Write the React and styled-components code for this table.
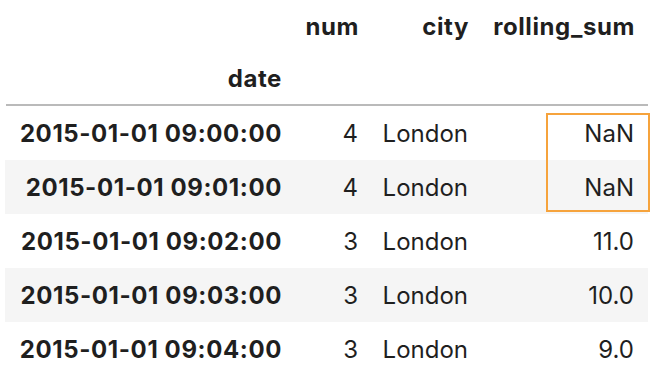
import styled, { createGlobalStyle } from "styled-components";

const GlobalStyle = createGlobalStyle`
  html, body {
    margin: 0;
    padding: 0;
    background: #ffffff;
  }
  body {
    font-family: Inter, "Liberation Sans", sans-serif;
    color: #1f1f1f;
  }
`;

const rows = [
  { date: "2015-01-01 09:00:00", num: 4, city: "London", sum: "NaN" },
  { date: "2015-01-01 09:01:00", num: 4, city: "London", sum: "NaN" },
  { date: "2015-01-01 09:02:00", num: 3, city: "London", sum: "11.0" },
  { date: "2015-01-01 09:03:00", num: 3, city: "London", sum: "10.0" },
  { date: "2015-01-01 09:04:00", num: 3, city: "London", sum: "9.0" },
];

export default function App() {
  return (
    <>
      <GlobalStyle />
      <Frame>
        <Table>
          <Row $height={52}>
            <Cell />
            <HeadCell>num</HeadCell>
            <HeadCell>city</HeadCell>
            <HeadCell>rolling_sum</HeadCell>
          </Row>
          <Row $height={52}>
            <HeadCell>date</HeadCell>
            <Cell />
            <Cell />
            <Cell />
          </Row>
          <Divider />
          {rows.map((r, i) => (
            <Row key={r.date} $height={54} $striped={i % 2 === 1}>
              <HeadCell>{r.date}</HeadCell>
              <Cell>{r.num}</Cell>
              <Cell>{r.city}</Cell>
              <Cell>{r.sum}</Cell>
            </Row>
          ))}
          <Highlight />
        </Table>
      </Frame>
    </>
  );
}

const Frame = styled.div`
  width: 656px;
  height: 386px;
  padding-left: 5px;
  box-sizing: border-box;
  overflow: hidden;
`;
const Table = styled.div`
  position: relative;
  width: 643px;
  display: flex;
  flex-direction: column;
`;
const Row = styled.div`
  display: grid;
  grid-template-columns: 290px 77px 110px 166px;
  height: ${(p) => p.$height}px;
  background: ${(p) => (p.$striped ? "#f5f5f5" : "transparent")};
`;
const Cell = styled.div`
  display: flex;
  align-items: center;
  justify-content: flex-end;
  padding: 0 14px;
  font-size: 24px;
  font-weight: 400;
  white-space: nowrap;
`;
const HeadCell = styled(Cell)`
  font-weight: 700;
  letter-spacing: 0.6px;
  padding-right: 13px;
`;
const Divider = styled.div`
  height: 2px;
  background: #bababa;
  margin-left: 1px;
`;
const Highlight = styled.div`
  position: absolute;
  left: 541px;
  top: 113px;
  width: 104px;
  height: 99px;
  border: 2px solid #f6a33c;
  box-sizing: border-box;
`;
